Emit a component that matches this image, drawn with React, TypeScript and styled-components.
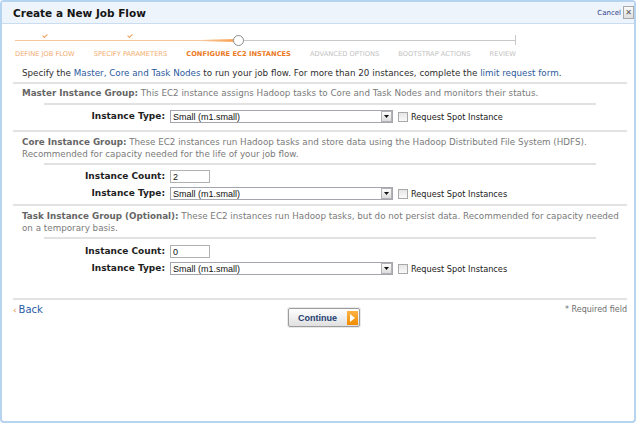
import React from 'react'
import styled, { createGlobalStyle } from 'styled-components'

type StepState = 'done' | 'current' | 'todo'

const STEPS: { label: string; state: StepState }[] = [
  { label: 'Define Job Flow', state: 'done' },
  { label: 'Specify Parameters', state: 'done' },
  { label: 'Configure EC2 Instances', state: 'current' },
  { label: 'Advanced Options', state: 'todo' },
  { label: 'Bootstrap Actions', state: 'todo' },
  { label: 'Review', state: 'todo' }
]

const ORANGE_LINE = '#f6c79c'
const GRAY_LINE = '#c8c8c8'

const GlobalStyle = createGlobalStyle`
  html, body {
    margin: 0;
    padding: 0;
    background: #fff;
  }
  body {
    font-family: 'DejaVu Sans', Verdana, sans-serif;
    color: #333;
  }
`

const Frame = styled.div`
  box-sizing: border-box;
  width: 636px;
  height: 423px;
  border: 2px solid #b6d3ef;
  border-radius: 4px;
  background: #fff;
  display: flex;
  flex-direction: column;
`

const Header = styled.div`
  height: 21px;
  background: #edf4fc;
  border-bottom: 1px solid #cadcf0;
  display: flex;
  align-items: center;
  justify-content: space-between;
  padding: 0 0 0 11px;
`

const Title = styled.h1`
  margin: 0;
  font-size: 10.5px;
  font-weight: bold;
  color: #151515;
`

const CancelGroup = styled.div`
  display: flex;
  align-items: center;
  gap: 2px;
`

const CancelLink = styled.a`
  font-size: 7px;
  color: #2f3d8c;
  text-decoration: none;
`

const CloseBox = styled.span`
  box-sizing: border-box;
  width: 11px;
  height: 13px;
  border: 1px solid #a9a9a9;
  background: linear-gradient(#fafafa, #dedede);
  display: flex;
  align-items: center;
  justify-content: center;
  font-size: 8px;
  line-height: 1;
  color: #555;
`

const Body = styled.div`
  flex: 1;
  padding: 9px 7px 0 11px;
  display: flex;
  flex-direction: column;
`

const Steps = styled.div`
  display: flex;
  margin-left: 2px;
`

const Step = styled.div`
  display: flex;
  flex-direction: column;
`

const MarkerRow = styled.div<{ $state: StepState; $last: boolean }>`
  height: 14px;
  display: flex;
  padding-right: ${({ $last }) => ($last ? 0 : 19)}px;
  background: ${({ $state, $last }) =>
    [
      $last ? `linear-gradient(${GRAY_LINE}, ${GRAY_LINE}) right 2px / 1px 10px no-repeat` : null,
      `linear-gradient(${$state === 'done' ? ORANGE_LINE : GRAY_LINE}, ${
        $state === 'done' ? ORANGE_LINE : GRAY_LINE
      }) 0 7px / 100% 1px no-repeat`
    ]
      .filter(Boolean)
      .join(', ')};
`

const MarkerSlot = styled.div<{ $state: StepState }>`
  flex: 1;
  display: flex;
  justify-content: center;
  align-items: ${({ $state }) => ($state === 'done' ? 'flex-start' : 'center')};
  background: ${({ $state }) =>
    $state === 'current'
      ? `linear-gradient(to right, rgba(247, 160, 80, 0) 30%, rgba(247, 150, 60, 0.9) 100%) 0 6px / 50% 3px no-repeat,
         linear-gradient(${ORANGE_LINE}, ${ORANGE_LINE}) 0 7px / 50% 1px no-repeat`
      : 'none'};
`

const CheckMark = styled.svg`
  margin-top: 1px;
`

const CurrentDot = styled.span`
  box-sizing: border-box;
  width: 11px;
  height: 11px;
  border-radius: 50%;
  border: 1.5px solid #8c8c8c;
  background: #fff;
`

const StepLabel = styled.span<{ $state: StepState; $last: boolean }>`
  margin-top: 3px;
  margin-right: ${({ $last }) => ($last ? 0 : 19)}px;
  font-size: 6.7px;
  line-height: 8px;
  text-transform: uppercase;
  white-space: nowrap;
  font-weight: ${({ $state }) => ($state === 'current' ? 'bold' : 'normal')};
  color: ${({ $state }) => ($state === 'done' ? '#f2ad70' : $state === 'current' ? '#ea7a1e' : '#c2c2c2')};
`

const Intro = styled.p`
  margin: 9px 0 0;
  padding-left: 9px;
  font-size: 8.75px;
  line-height: 12px;
  color: #2e2e2e;
`

const Link = styled.a`
  color: #2c5a9c;
  text-decoration: none;
`

const Divider = styled.div<{ $inset?: boolean; $space?: number }>`
  border-top: 2px solid #e2e2e2;
  margin: ${({ $space = 3 }) => $space}px ${({ $inset }) => ($inset ? 31 : 0)}px 0;
`

const GroupText = styled.p<{ $space?: number }>`
  margin: ${({ $space = 4 }) => $space}px 0 0;
  padding-left: 9px;
  font-size: 8.75px;
  line-height: 12px;
  color: #7a7a7a;
`

const GroupTitle = styled.b`
  color: #666;
`

const FormGrid = styled.div<{ $space: number }>`
  display: grid;
  grid-template-columns: 152px auto;
  column-gap: 5px;
  row-gap: 4px;
  align-items: center;
  margin-top: ${({ $space }) => $space}px;
`

const FieldLabel = styled.label`
  text-align: right;
  font-size: 9px;
  font-weight: bold;
  color: #1e1e1e;
  line-height: 13px;
`

const FieldControls = styled.div`
  display: flex;
  align-items: center;
`

const SelectBox = styled.div`
  box-sizing: border-box;
  width: 223px;
  height: 13px;
  border: 1px solid #a3a7ad;
  background: #fff;
  display: flex;
  align-items: center;
`

const SelectValue = styled.span`
  flex: 1;
  padding-left: 2px;
  font-family: 'Liberation Sans', Arial, sans-serif;
  font-size: 9px;
  color: #111;
`

const SelectArrow = styled.span`
  box-sizing: border-box;
  width: 11px;
  height: 11px;
  border: 1px solid #b3b3b3;
  background: linear-gradient(#fdfdfd, #dcdcdc);
  display: flex;
  align-items: center;
  justify-content: center;
`

const CountInput = styled.input`
  box-sizing: border-box;
  width: 40px;
  height: 13px;
  border: 1px solid #b0b0b0;
  padding: 0 2px;
  font-family: 'Liberation Sans', Arial, sans-serif;
  font-size: 9px;
  color: #111;
  outline: none;
`

const CheckBox = styled.span`
  box-sizing: border-box;
  width: 10px;
  height: 10px;
  margin-left: 5px;
  border: 1px solid #a8a8a8;
  background: linear-gradient(#e6e6e6, #fafafa);
`

const CheckText = styled.span`
  margin-left: 3px;
  font-size: 8.2px;
  color: #222;
`

const Footer = styled.div`
  display: grid;
  grid-template-columns: 1fr auto 1fr;
  align-items: start;
  margin-top: 4px;
`

const BackLink = styled.a`
  font-size: 10px;
  color: #2a5ea6;
  text-decoration: none;
  line-height: 12px;
`

const BackArrow = styled.span`
  color: #ea8a3a;
  font-size: 9px;
  margin-right: 2px;
`

const ContinueButton = styled.button`
  box-sizing: border-box;
  width: 72px;
  height: 19px;
  margin: 4px 0 0 8px;
  padding: 0 1px 0 9px;
  border: 1px solid #9c9c9c;
  border-radius: 2px;
  background: linear-gradient(#fefefe, #e0e0e0);
  box-shadow: 0 0 0 1px #e9e9e9;
  display: flex;
  align-items: center;
  justify-content: space-between;
  font-family: 'Liberation Sans', Arial, sans-serif;
  font-size: 9px;
  font-weight: bold;
  color: #1d3d70;
`

const ButtonArrow = styled.span`
  width: 11px;
  height: 14px;
  background: linear-gradient(#fdb446, #f18b00);
  display: flex;
  align-items: center;
  justify-content: center;
`

const Required = styled.span`
  justify-self: end;
  font-size: 8px;
  line-height: 12px;
  color: #6e6e6e;
`

const InstanceRow = ({ label, value, spotText }: { label: string; value: string; spotText: string }) => (
  <>
    <FieldLabel>{label}</FieldLabel>
    <FieldControls>
      <SelectBox>
        <SelectValue>{value}</SelectValue>
        <SelectArrow>
          <svg width="5" height="3" viewBox="0 0 5 3">
            <path d="M0 0H5L2.5 3Z" fill="#111" />
          </svg>
        </SelectArrow>
      </SelectBox>
      <CheckBox />
      <CheckText>{spotText}</CheckText>
    </FieldControls>
  </>
)

const CountRow = ({ value }: { value: string }) => (
  <>
    <FieldLabel>Instance Count:</FieldLabel>
    <FieldControls>
      <CountInput readOnly value={value} />
    </FieldControls>
  </>
)

export default function App() {
  return (
    <>
      <GlobalStyle />
      <Frame>
        <Header>
          <Title>Create a New Job Flow</Title>
          <CancelGroup>
            <CancelLink>Cancel</CancelLink>
            <CloseBox>✕</CloseBox>
          </CancelGroup>
        </Header>
        <Body>
          <Steps>
            {STEPS.map((s, i) => {
              const last = i === STEPS.length - 1
              return (
                <Step key={s.label}>
                  <MarkerRow $state={s.state} $last={last}>
                    <MarkerSlot $state={s.state}>
                      {s.state === 'done' && (
                        <CheckMark width="6" height="4" viewBox="0 0 6 4">
                          <path d="M0.6 1.6L2.4 3.4L5.4 0.4" fill="none" stroke="#f2a460" strokeWidth="1.1" />
                        </CheckMark>
                      )}
                      {s.state === 'current' && <CurrentDot />}
                    </MarkerSlot>
                  </MarkerRow>
                  <StepLabel $state={s.state} $last={last}>
                    {s.label}
                  </StepLabel>
                </Step>
              )
            })}
          </Steps>

          <Intro>
            Specify the <Link>Master, Core and Task Nodes</Link> to run your job flow. For more than 20 instances,
            complete the <Link>limit request form</Link>.
          </Intro>
          <Divider $space={3} />

          <GroupText $space={3}>
            <GroupTitle>Master Instance Group:</GroupTitle> This EC2 instance assigns Hadoop tasks to Core and Task
            Nodes and monitors their status.
          </GroupText>
          <Divider $inset $space={4} />
          <FormGrid $space={5}>
            <InstanceRow label="Instance Type:" value="Small (m1.small)" spotText="Request Spot Instance" />
          </FormGrid>
          <Divider $space={7} />

          <GroupText $space={4}>
            <GroupTitle>Core Instance Group:</GroupTitle> These EC2 instances run Hadoop tasks and store data using the
            Hadoop Distributed File System (HDFS).
            <br />
            Recommended for capacity needed for the life of your job flow.
          </GroupText>
          <Divider $inset $space={3} />
          <FormGrid $space={5}>
            <CountRow value="2" />
            <InstanceRow label="Instance Type:" value="Small (m1.small)" spotText="Request Spot Instances" />
          </FormGrid>
          <Divider $space={4} />

          <GroupText $space={4}>
            <GroupTitle>Task Instance Group (Optional):</GroupTitle> These EC2 instances run Hadoop tasks, but do not
            persist data. Recommended for capacity needed
            <br />
            on a temporary basis.
          </GroupText>
          <Divider $inset $space={3} />
          <FormGrid $space={6}>
            <CountRow value="0" />
            <InstanceRow label="Instance Type:" value="Small (m1.small)" spotText="Request Spot Instances" />
          </FormGrid>
          <Divider $space={23} />

          <Footer>
            <BackLink>
              <BackArrow>‹</BackArrow>Back
            </BackLink>
            <ContinueButton>
              Continue
              <ButtonArrow>
                <svg width="5" height="8" viewBox="0 0 5 8">
                  <path d="M0 0L5 4L0 8Z" fill="#fff" />
                </svg>
              </ButtonArrow>
            </ContinueButton>
            <Required>* Required field</Required>
          </Footer>
        </Body>
      </Frame>
    </>
  )
}
